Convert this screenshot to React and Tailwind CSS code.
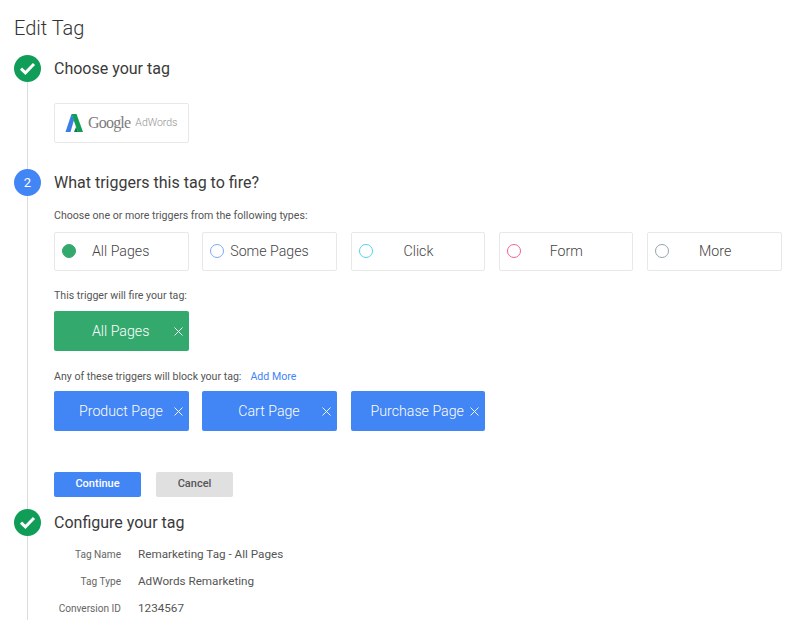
import React from 'react';

const triggers = [
    { label: 'All Pages', dot: 'bg-[#34a96d] border-[#34a96d]', text: 'pl-[16px]' },
    { label: 'Some Pages', dot: 'border-[#7fa9f5]', text: 'pl-[6px]' },
    { label: 'Click', dot: 'border-[#55d4ea]', text: 'pl-[31px]' },
    { label: 'Form', dot: 'border-[#f0648c]', text: 'pl-[29px]' },
    { label: 'More', dot: 'border-[#8fa5b0]', text: 'pl-[30px]' },
];

const blockers = [
    { label: 'Product Page', text: 'pl-[25px]' },
    { label: 'Cart Page', text: 'pl-[36px]' },
    { label: 'Purchase Page', text: 'pl-[20px]' },
];

const details = [
    ['Tag Name', 'Remarketing Tag - All Pages'],
    ['Tag Type', 'AdWords Remarketing'],
    ['Conversion ID', '1234567'],
];

const CheckCircle = () => (
    <div className="w-[27px] h-[27px] rounded-full bg-[#0f9d58] flex items-center justify-center shrink-0">
        <svg width="19" height="19" viewBox="0 0 19 19" fill="none">
            <path d="M3 9.6 L7.4 13.8 L16 5" stroke="white" strokeWidth="3" />
        </svg>
    </div>
);

const Rail = ({ badge }) => (
    <div className="w-[27px] shrink-0 flex flex-col items-center">
        {badge}
        <div className="w-[1.5px] flex-1 bg-[#dcdcdc]"></div>
    </div>
);

const CloseX = () => (
    <svg width="9" height="9" viewBox="0 0 9 9" fill="none" className="shrink-0">
        <path d="M0.5 0.5 L8.5 8.5 M8.5 0.5 L0.5 8.5" stroke="white" strokeWidth="0.9" />
    </svg>
);

const App = () => {
    return (
        <div className="w-[793px] h-[633px] overflow-hidden bg-white pl-[14px] font-['Roboto',sans-serif] text-[#3c3c3c]">
            <h1 className="h-[55px] pt-[15px] text-[20px] leading-[26px] font-light text-[#333333]">Edit Tag</h1>

            {/* Paso 1 */}
            <div className="flex h-[114px] gap-[13px]">
                <Rail badge={<CheckCircle />} />
                <div>
                    <h2 className="h-[48px] pt-[3px] text-[16px] leading-[21px] text-[#3a3a3a]">Choose your tag</h2>
                    <div className="w-[135px] h-[40px] border border-[#e8e8e8] rounded-[2px] flex items-center pl-[10px]">
                        <svg width="19" height="20" viewBox="0 0 19 20" className="shrink-0">
                            <path d="M6.5 1 L0.5 19 L5.5 19 L9 7 Z" fill="#3b7de8" />
                            <path d="M6.5 1 L11.5 1 L18 19 L13 19 Z" fill="#0f9d58" />
                            <path d="M8 5 L11 14 L9 19 L13 19 Z" fill="#0b7a45" />
                        </svg>
                        <span className="ml-[4px] font-['Liberation_Serif',serif] text-[16px] leading-none tracking-[-0.8px] text-[#7c7c7c]">Google</span>
                        <span className="ml-[5px] text-[10.5px] font-light leading-none text-[#8f8f8f]">AdWords</span>
                    </div>
                </div>
            </div>

            {/* Paso 2 */}
            <div className="flex h-[340px] gap-[13px]">
                <Rail
                    badge={
                        <div className="w-[27px] h-[27px] rounded-full bg-[#4285f4] flex items-center justify-center shrink-0 text-white text-[13px]">2</div>
                    }
                />
                <div>
                    <h2 className="h-[39px] pt-[3px] text-[16px] leading-[21px] text-[#3a3a3a]">What triggers this tag to fire?</h2>
                    <p className="text-[10.6px] leading-[16px] text-[#555555]">Choose one or more triggers from the following types:</p>
                    <div className="mt-[8px] flex gap-[13.75px]">
                        {triggers.map((t) => (
                            <div key={t.label} className="w-[134.5px] h-[39px] border border-[#e8e8e8] rounded-[2px] flex items-center pl-[7px] text-[14.2px] font-light text-[#444444]">
                                <span className={`w-[14px] h-[14px] mb-[1px] rounded-full border-[1.5px] shrink-0 ${t.dot}`}></span>
                                <span className={`pt-[1px] ${t.text}`}>{t.label}</span>
                            </div>
                        ))}
                    </div>
                    <p className="mt-[17px] text-[10.6px] leading-[16px] text-[#555555]">This trigger will fire your tag:</p>
                    <div className="mt-[7px] w-[134.5px] h-[40px] bg-[#34a96d] rounded-[2px] flex items-center justify-between pl-[38px] pr-[6px] text-[14.2px] font-light text-white">
                        <span className="pt-[2px]">All Pages</span>
                        <CloseX />
                    </div>
                    <p className="mt-[18px] text-[10.6px] leading-[16px] text-[#555555]">
                        Any of these triggers will block your tag:
                        <span className="ml-[9px] text-[#4285f4]">Add More</span>
                    </p>
                    <div className="mt-[6px] flex gap-[13.75px]">
                        {blockers.map((b) => (
                            <div key={b.label} className={`w-[134.5px] h-[40px] bg-[#4285f4] rounded-[2px] flex items-center justify-between pr-[6px] text-[14.2px] font-light text-white ${b.text}`}>
                                <span className="pt-[2px] whitespace-nowrap">{b.label}</span>
                                <CloseX />
                            </div>
                        ))}
                    </div>
                    <div className="mt-[41px] flex gap-[15px] text-[11px] font-medium">
                        <button className="w-[87px] h-[25px] bg-[#4285f4] text-white rounded-[2px]">Continue</button>
                        <button className="w-[77px] h-[25px] bg-[#e0e0e0] text-[#555555] rounded-[2px]">Cancel</button>
                    </div>
                </div>
            </div>

            {/* Paso 3 */}
            <div className="flex h-[111px] gap-[13px]">
                <Rail badge={<CheckCircle />} />
                <div>
                    <h2 className="h-[38px] pt-[3px] text-[16px] leading-[21px] text-[#3a3a3a]">Configure your tag</h2>
                    <div className="flex flex-col gap-[11px]">
                        {details.map(([k, v]) => (
                            <div key={k} className="flex h-[16px] items-center gap-[17px]">
                                <span className="w-[67px] text-right text-[10.1px] text-[#666666] whitespace-nowrap">{k}</span>
                                <span className="text-[11.7px] text-[#555555]">{v}</span>
                            </div>
                        ))}
                    </div>
                </div>
            </div>
        </div>
    );
};

export default App;
